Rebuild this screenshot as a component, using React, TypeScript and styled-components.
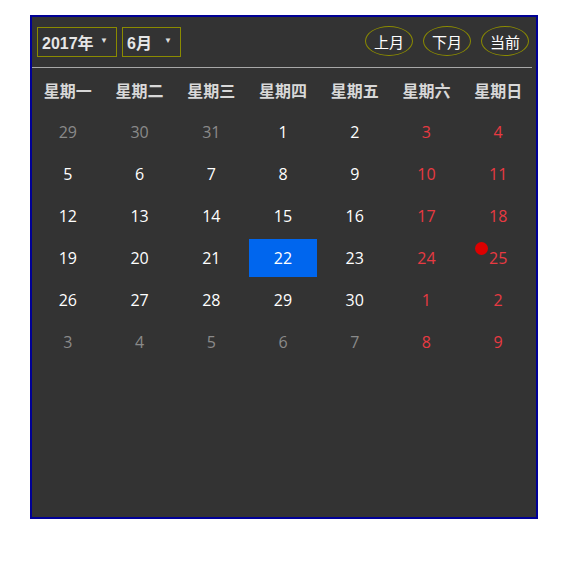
import React from "react";
import styled, { createGlobalStyle } from "styled-components";

const Global = createGlobalStyle`
  html, body { margin: 0; padding: 0; background: #fff; }
  body { font-family: "Open Sans", "Noto Sans CJK SC", sans-serif; }
`;

const Page = styled.div`
  padding: 15px 0 0 30px;
`;

const Calendar = styled.div`
  position: relative;
  width: 504px;
  height: 500px;
  background: #333;
  border: 2px solid #000096;
`;

const Header = styled.div`
  display: flex;
  align-items: center;
  justify-content: space-between;
  margin-right: 4px;
  padding-left: 5px;
  border-bottom: 1px solid #a8a8a8;
  box-sizing: border-box;
  height: 51px;
`;

const Selects = styled.div`
  display: flex;
  gap: 5px;
  margin-top: -1px;
`;

const Select = styled.div<{ $w: number }>`
  width: ${(p) => p.$w}px;
  height: 30px;
  box-sizing: border-box;
  border: 1px solid #8b8b00;
  display: flex;
  align-items: center;
  justify-content: space-between;
  padding: 0 8px 0 4px;
  color: #e6e6e6;
  font-family: "Liberation Sans", "Noto Sans CJK SC", sans-serif;
  font-weight: bold;
  font-size: 16px;
`;

const Arrow = styled.span`
  font-size: 8px;
  color: #ddd;
  margin-top: -2px;
`;

const Buttons = styled.div`
  display: flex;
  gap: 10px;
  margin-right: 3px;
  margin-top: -2px;
`;

const RoundButton = styled.div`
  width: 48px;
  height: 30px;
  box-sizing: border-box;
  border: 1px solid #8b8b00;
  border-radius: 50%;
  display: flex;
  align-items: center;
  justify-content: center;
  color: #fff;
  font-family: "Noto Sans CJK SC", sans-serif;
  font-size: 15px;
`;

const Grid = styled.div`
  display: grid;
  grid-template-columns: repeat(7, 1fr);
  width: 502px;
  margin-top: 1px;
  grid-auto-rows: 42px;
`;

const WeekDay = styled.div`
  display: flex;
  align-items: center;
  justify-content: center;
  color: #d8d8d8;
  font-family: "Noto Sans CJK SC", sans-serif;
  font-weight: bold;
  font-size: 16px;
`;

const Day = styled.div<{ $tone: "other" | "normal" | "weekend"; $today?: boolean }>`
  position: relative;
  display: flex;
  align-items: center;
  justify-content: center;
  margin: 2px 2px;
  font-size: 16px;
  color: ${(p) =>
    p.$today ? "#fff" : p.$tone === "other" ? "#8a8a8a" : p.$tone === "weekend" ? "#e83a42" : "#fff"};
  background: ${(p) => (p.$today ? "#0066ee" : "transparent")};
`;

const Dot = styled.span`
  position: absolute;
  left: 11px;
  top: 3px;
  width: 13px;
  height: 13px;
  border-radius: 50%;
  background: #dd0000;
`;

type Cell = { d: number; tone: "other" | "normal" | "weekend"; today?: boolean; dot?: boolean };

const weekDays = ["星期一", "星期二", "星期三", "星期四", "星期五", "星期六", "星期日"];

function buildCells(): Cell[] {
  const cells: Cell[] = [];
  const prev = [29, 30, 31];
  prev.forEach((d) => cells.push({ d, tone: "other" }));
  for (let d = 1; d <= 30; d++) {
    const idx = cells.length % 7;
    cells.push({ d, tone: idx >= 5 ? "weekend" : "normal", today: d === 22, dot: d === 25 });
  }
  let n = 1;
  while (cells.length < 42) {
    const idx = cells.length % 7;
    cells.push({ d: n++, tone: idx >= 5 ? "weekend" : "other" });
  }
  return cells;
}

export default function App() {
  const cells = buildCells();
  return (
    <>
      <Global />
      <Page>
        <Calendar>
          <Header>
            <Selects>
              <Select $w={80}>
                <span>2017年</span>
                <Arrow>▼</Arrow>
              </Select>
              <Select $w={59}>
                <span>6月</span>
                <Arrow>▼</Arrow>
              </Select>
            </Selects>
            <Buttons>
              <RoundButton>上月</RoundButton>
              <RoundButton>下月</RoundButton>
              <RoundButton>当前</RoundButton>
            </Buttons>
          </Header>
          <Grid>
            {weekDays.map((w) => (
              <WeekDay key={w}>{w}</WeekDay>
            ))}
            {cells.map((c, i) => (
              <Day key={i} $tone={c.tone} $today={c.today}>
                {c.dot && <Dot />}
                {c.d}
              </Day>
            ))}
          </Grid>
        </Calendar>
      </Page>
    </>
  );
}
